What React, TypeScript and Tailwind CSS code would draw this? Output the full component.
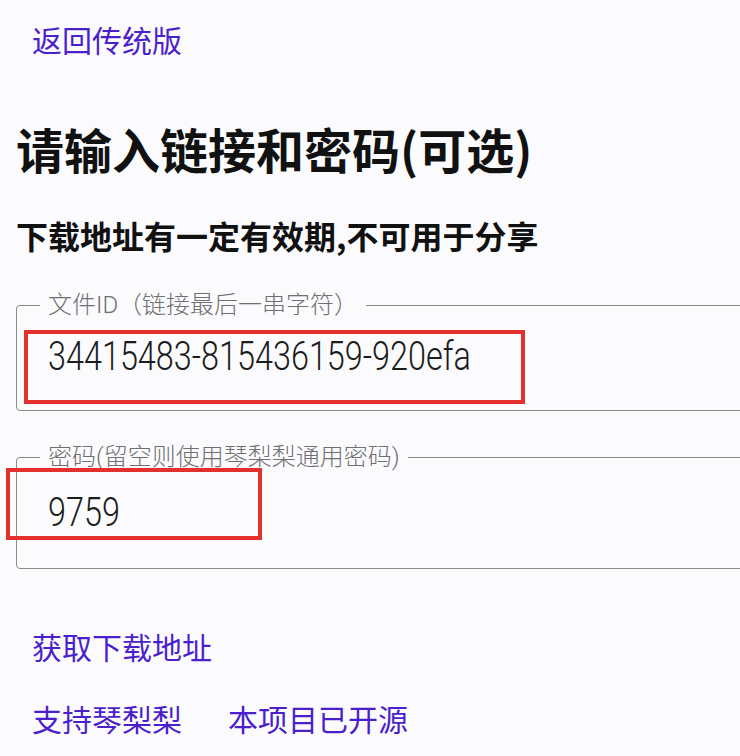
import React from "react";

const cjk = "font-['Noto_Sans_CJK_SC',sans-serif]";

function Field({
  label,
  value,
  valueClass,
  boxClass,
}: {
  label: string;
  value: string;
  valueClass: string;
  boxClass: string;
}) {
  return (
    <div className="relative">
      <fieldset className="ml-4 w-[740px] rounded-[4px] border border-[#8c8c8c] pl-[23px]">
        <legend className="px-2 font-['Roboto','Noto_Sans_CJK_SC',sans-serif] text-[24px] font-light leading-none text-[#707070]">
          {label}
        </legend>
        <div className={`pl-2 ${valueClass}`}>
          {/* the input text is narrow in the original, so squeeze Roboto a bit */}
          <div className="origin-left scale-x-[0.81] font-['Roboto',sans-serif] text-[40px] font-light leading-none text-[#1c1c1c]">
            {value}
          </div>
        </div>
      </fieldset>
      {/* red annotation box */}
      <div className={`absolute border-4 border-[#e3302f] ${boxClass}`} />
    </div>
  );
}

export default function App() {
  return (
    <div className={`min-h-[756px] w-[740px] overflow-hidden bg-[#fbfbfe] ${cjk}`}>
      <div className="pl-8 pt-[24px]">
        <a className="text-[30px] leading-none text-[#4b1fcc]">返回传统版</a>
      </div>

      <h1 className="mt-[67px] pl-4 text-[48px] font-bold leading-none text-[#111]">
        请输入链接和密码(可选)
      </h1>
      <h2 className="mt-[47px] pl-4 text-[32px] font-bold leading-none text-[#111]">
        下载地址有一定有效期,不可用于分享
      </h2>

      <div className="mt-[42px] flex flex-col gap-[34px]">
        <Field
          label="文件ID（链接最后一串字符）"
          value="34415483-815436159-920efa"
          valueClass="mt-[20px] pb-[33px]"
          boxClass="left-[24px] top-[37px] h-[74px] w-[501px]"
        />
        <Field
          label="密码(留空则使用琴梨梨通用密码)"
          value="9759"
          valueClass="mt-[24px] pb-[35px]"
          boxClass="left-[6px] top-[23px] h-[72px] w-[256px]"
        />
      </div>

      <div className="mt-[62px] pl-8">
        <a className="text-[30px] leading-none text-[#4b1fcc]">获取下载地址</a>
      </div>
      <div className="mt-[39px] flex gap-[46px] pl-8 pb-4">
        <a className="text-[30px] leading-none text-[#4b1fcc]">支持琴梨梨</a>
        <a className="text-[30px] leading-none text-[#4b1fcc]">本项目已开源</a>
      </div>
    </div>
  );
}
